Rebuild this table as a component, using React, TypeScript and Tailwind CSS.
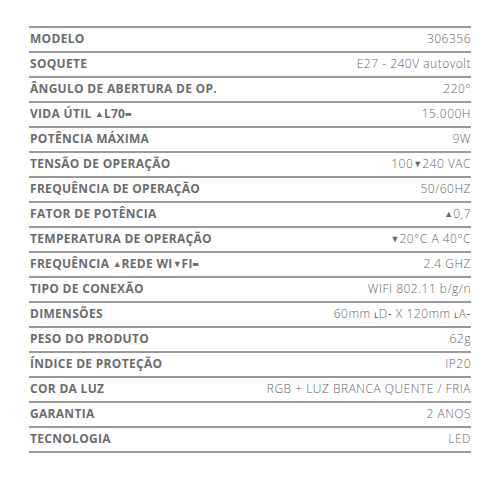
import React from "react";

const Up = () => <span className="text-[9px] align-[1px] tracking-normal">▲</span>;
const Down = () => <span className="text-[9px] align-[1px] tracking-normal">▼</span>;
const Dots = () => <span className="text-[6px] align-[2px] tracking-[-1px]">■■</span>;

const rows: [React.ReactNode, React.ReactNode][] = [
  ["MODELO", "306356"],
  ["SOQUETE", "E27 - 240V autovolt"],
  ["ÂNGULO DE ABERTURA DE OP.", "220°"],
  [<>VIDA ÚTIL <Up />L70<Dots /></>, "15.000H"],
  ["POTÊNCIA MÁXIMA", "9W"],
  ["TENSÃO DE OPERAÇÃO", <>100<Down />240 VAC</>],
  ["FREQUÊNCIA DE OPERAÇÃO", "50/60HZ"],
  ["FATOR DE POTÊNCIA", <><Up />0,7</>],
  ["TEMPERATURA DE OPERAÇÃO", <><Down />20°C A 40°C</>],
  [<>FREQUÊNCIA <Up />REDE WI<Down />FI<Dots /></>, "2.4 GHZ"],
  ["TIPO DE CONEXÃO", "WIFI 802.11 b/g/n"],
  ["DIMENSÕES", <>60mm ˪D‐ X 120mm ˪A‐</>],
  ["PESO DO PRODUTO", "62g"],
  ["ÍNDICE DE PROTEÇÃO", "IP20"],
  ["COR DA LUZ", "RGB + LUZ BRANCA QUENTE / FRIA"],
  ["GARANTIA", "2 ANOS"],
  ["TECNOLOGIA", "LED"],
];

export default function App() {
  return (
    <div className="w-[500px] h-[484px] bg-white pt-[26px] pl-[29px]" style={{ fontFamily: '"Open Sans", sans-serif' }}>
      <div className="w-[442px] border-b-2 border-[#9a9a9a]">
        {rows.map(([l, v], i) => (
          <div key={i} className="h-[25px] border-t-2 border-[#9a9a9a] flex items-center justify-between pl-px pb-[1px]">
            <span className="text-[12px] font-bold tracking-[0.3px] text-[#6c6c6c] leading-none">{l}</span>
            <span className="text-[12px] font-light tracking-[0.5px] text-[#666666] leading-none">{v}</span>
          </div>
        ))}
      </div>
    </div>
  );
}
